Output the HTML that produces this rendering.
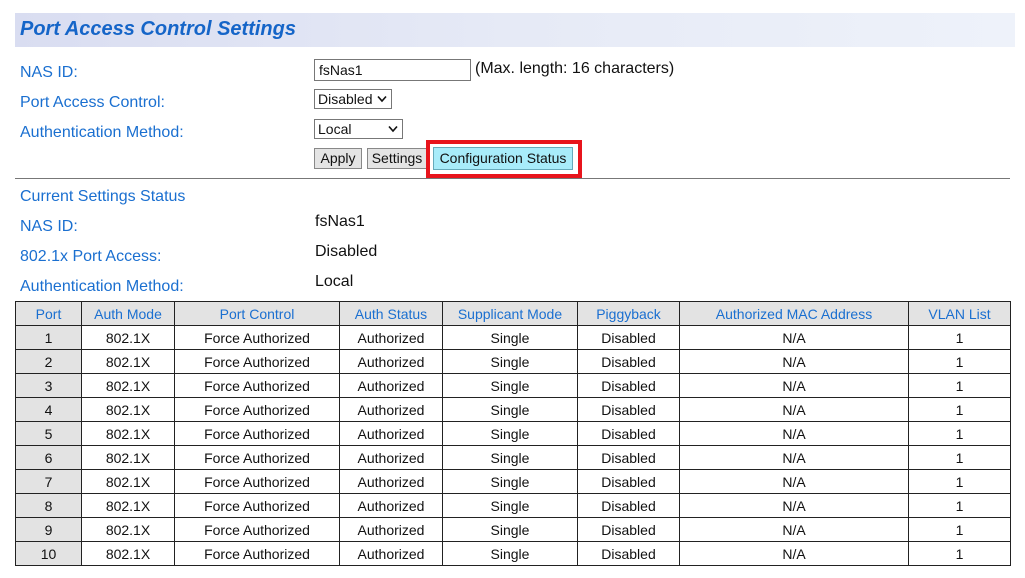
<!DOCTYPE html>
<html><head><meta charset="utf-8"><style>
body{margin:0;width:1025px;height:578px;background:#fff;font-family:"Liberation Sans",Arial,sans-serif;position:relative;overflow:hidden}
.a{position:absolute;white-space:nowrap}
.lbl{color:#1a6fd0;font-size:16px}
.val{color:#111;font-size:16px}
.band{left:15px;top:13px;width:1000px;height:34px;background:linear-gradient(90deg,#d9ddf1,#e6eaf6 50%,#eef2fa)}
.title{left:20px;top:18px;font-size:20px;font-weight:bold;font-style:italic;color:#1565c8}
.inp{border:1px solid #777;background:#fff;font-size:14px;color:#111;box-sizing:border-box;padding:2px 4px}
.btn{border:1px solid #888;background:#e4e4e4;font-size:14px;color:#111;box-sizing:border-box;text-align:center;line-height:18px}
table{position:absolute;left:15px;top:301px;border-collapse:collapse;font-size:14px}
td,th{border:1px solid #222;height:23px;padding:0;text-align:center;color:#111;font-weight:normal}
th{background:#e3e3e3;color:#1a6fd0}
td.p{background:#e3e3e3}
svg.c{position:absolute;top:5px}
</style></head><body>
<div class="a band"></div>
<div class="a title">Port Access Control Settings</div>
<div class="a lbl" style="left:20px;top:64px">NAS ID:</div>
<div class="a lbl" style="left:20px;top:94px">Port Access Control:</div>
<div class="a lbl" style="left:20px;top:124px">Authentication Method:</div>
<div class="a inp" style="left:314px;top:59px;width:157px;height:22px">fsNas1</div>
<div class="a val" style="left:475px;top:60px">(Max. length: 16 characters)</div>
<div class="a inp" style="left:314px;top:89px;width:78px;height:20px;padding:1px 3px">Disabled<svg class="c" style="right:4px" width="10" height="8"><path d="M1 1.5L5 6L9 1.5" stroke="#111" stroke-width="1.6" fill="none"/></svg></div>
<div class="a inp" style="left:314px;top:119px;width:89px;height:20px;padding:1px 3px">Local<svg class="c" style="right:4px" width="10" height="8"><path d="M1 1.5L5 6L9 1.5" stroke="#111" stroke-width="1.6" fill="none"/></svg></div>
<div class="a btn" style="left:314px;top:148px;width:48px;height:21px">Apply</div>
<div class="a btn" style="left:367px;top:148px;width:60px;height:21px">Settings</div>
<div class="a" style="left:426px;top:140px;width:156px;height:38px;border:4px solid #e8141c;box-sizing:border-box"></div>
<div class="a btn" style="left:433px;top:147px;width:140px;height:23px;background:#a8ecfa;border-color:#6ab;line-height:20px">Configuration Status</div>
<div class="a" style="left:15px;top:178px;width:995px;height:1px;background:#777"></div>
<div class="a lbl" style="left:20px;top:188px">Current Settings Status</div>
<div class="a lbl" style="left:20px;top:218px">NAS ID:</div>
<div class="a lbl" style="left:20px;top:248px">802.1x Port Access:</div>
<div class="a lbl" style="left:20px;top:278px">Authentication Method:</div>
<div class="a val" style="left:315px;top:213px">fsNas1</div>
<div class="a val" style="left:315px;top:243px">Disabled</div>
<div class="a val" style="left:315px;top:273px">Local</div>
<table>
<tr><th style="width:65px">Port</th><th style="width:92px">Auth Mode</th><th style="width:164px">Port Control</th><th style="width:102px">Auth Status</th><th style="width:134px">Supplicant Mode</th><th style="width:101px">Piggyback</th><th style="width:228px">Authorized MAC Address</th><th style="width:101px">VLAN List</th></tr>
<tr><td class="p">1</td><td>802.1X</td><td>Force Authorized</td><td>Authorized</td><td>Single</td><td>Disabled</td><td>N/A</td><td>1</td></tr>
<tr><td class="p">2</td><td>802.1X</td><td>Force Authorized</td><td>Authorized</td><td>Single</td><td>Disabled</td><td>N/A</td><td>1</td></tr>
<tr><td class="p">3</td><td>802.1X</td><td>Force Authorized</td><td>Authorized</td><td>Single</td><td>Disabled</td><td>N/A</td><td>1</td></tr>
<tr><td class="p">4</td><td>802.1X</td><td>Force Authorized</td><td>Authorized</td><td>Single</td><td>Disabled</td><td>N/A</td><td>1</td></tr>
<tr><td class="p">5</td><td>802.1X</td><td>Force Authorized</td><td>Authorized</td><td>Single</td><td>Disabled</td><td>N/A</td><td>1</td></tr>
<tr><td class="p">6</td><td>802.1X</td><td>Force Authorized</td><td>Authorized</td><td>Single</td><td>Disabled</td><td>N/A</td><td>1</td></tr>
<tr><td class="p">7</td><td>802.1X</td><td>Force Authorized</td><td>Authorized</td><td>Single</td><td>Disabled</td><td>N/A</td><td>1</td></tr>
<tr><td class="p">8</td><td>802.1X</td><td>Force Authorized</td><td>Authorized</td><td>Single</td><td>Disabled</td><td>N/A</td><td>1</td></tr>
<tr><td class="p">9</td><td>802.1X</td><td>Force Authorized</td><td>Authorized</td><td>Single</td><td>Disabled</td><td>N/A</td><td>1</td></tr>
<tr><td class="p">10</td><td>802.1X</td><td>Force Authorized</td><td>Authorized</td><td>Single</td><td>Disabled</td><td>N/A</td><td>1</td></tr>
</table>
</body></html>
